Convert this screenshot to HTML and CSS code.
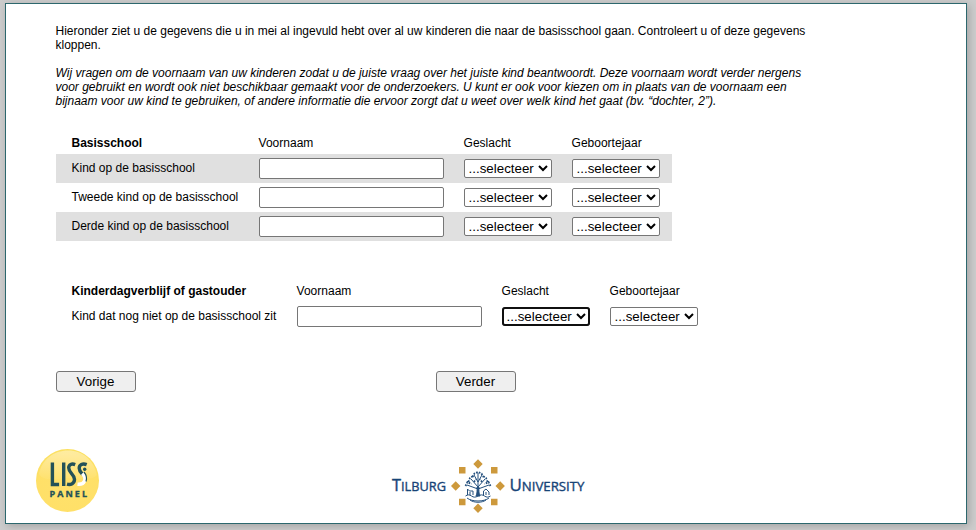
FILE: index.html
```html
<!DOCTYPE html>
<html lang="nl">
<head>
<meta charset="utf-8">
<title>LISS panel</title>
<link rel="stylesheet" href="styles.css">
</head>
<body>
<main class="page">
  <form class="content">
    <p class="intro">Hieronder ziet u de gegevens die u in mei al ingevuld hebt over al uw kinderen die naar de basisschool gaan. Controleert u of deze gegevens<br>kloppen.</p>
    <p class="intro note">Wij vragen om de voornaam van uw kinderen zodat u de juiste vraag over het juiste kind beantwoordt. Deze voornaam wordt verder nergens<br>voor gebruikt en wordt ook niet beschikbaar gemaakt voor de onderzoekers. U kunt er ook voor kiezen om in plaats van de voornaam een<br>bijnaam voor uw kind te gebruiken, of andere informatie die ervoor zorgt dat u weet over welk kind het gaat (bv. “dochter, 2”).</p>

    <section class="children school">
      <div class="row head"><strong>Basisschool</strong><span>Voornaam</span><span>Geslacht</span><span>Geboortejaar</span></div>
      <div class="row shaded"><span>Kind op de basisschool</span><input type="text"><select><option>...selecteer</option></select><select><option>...selecteer</option></select></div>
      <div class="row"><span>Tweede kind op de basisschool</span><input type="text"><select><option>...selecteer</option></select><select><option>...selecteer</option></select></div>
      <div class="row shaded"><span>Derde kind op de basisschool</span><input type="text"><select><option>...selecteer</option></select><select><option>...selecteer</option></select></div>
    </section>

    <section class="children daycare">
      <div class="row head"><strong>Kinderdagverblijf of gastouder</strong><span>Voornaam</span><span>Geslacht</span><span>Geboortejaar</span></div>
      <div class="row"><span>Kind dat nog niet op de basisschool zit</span><input type="text"><select class="active"><option>...selecteer</option></select><select><option>...selecteer</option></select></div>
    </section>

    <div class="buttons"><button type="button">Vorige</button><button type="button">Verder</button></div>
  </form>

  <footer class="logos">
    <svg class="liss" width="64" height="65" viewBox="0 0 64 65">
      <defs>
        <radialGradient id="ball" cx=".5" cy=".55" r=".55"><stop offset="0" stop-color="#ffe16c"/><stop offset=".86" stop-color="#ffe068"/><stop offset="1" stop-color="#fbe05f"/></radialGradient>
        <linearGradient id="shine" x1="0" y1="0" x2="0" y2="1"><stop offset="0" stop-color="#fff" stop-opacity=".4"/><stop offset="1" stop-color="#fff" stop-opacity=".04"/></linearGradient>
      </defs>
      <circle cx="31.500" cy="32.500" r="31.500" fill="url(#ball)"/>
      <path d="M3 26C6 11 18 2.500 32 2.500c15 0 26 10 29 24.500-5 6-14 3-26 3-13 0-26 5-32-4z" fill="url(#shine)"/>
      <g fill="none" stroke="#245158" stroke-width="3.400">
        <path d="M16.400 14.500v22h6.700M27.700 14.500v23.500"/>
        <path d="M39.200 16.600c-3.400-1.300-6.500-.2-6.500 3.200 0 5.200 5.800 6.300 5.800 11.500 0 4.300-3.700 5.900-7.500 4.900"/>
        <path d="M50.700 16.600c-4.200-1.700-7.500.1-7.500 3.600 0 2.700 1.600 4.200 3.400 6.200"/>
        <path d="M46.300 25.500c4.700 4.500 3 11.500-4.800 10.700" stroke="#fff"/>
      </g>
      <circle cx="48.700" cy="21.300" r="1.700" fill="#245158"/>
      <path d="M48 24c2.500 3 3 6.500 2 9.500" fill="none" stroke="#245158" stroke-width="1.200"/>
      <text x="13.500" y="48.700" textLength="37.500" class="liss-name">PANEL</text>
    </svg>

    <svg class="tilburg" width="196" height="56" viewBox="0 0 196 56">
      <g class="uni-name">
        <text x="2" y="33" textLength="54" lengthAdjust="spacingAndGlyphs"><tspan class="cap">T</tspan>ILBURG</text>
        <text x="119.500" y="33" textLength="75" lengthAdjust="spacingAndGlyphs"><tspan class="cap">U</tspan>NIVERSITY</text>
      </g>
      <g fill="#cd993c">
        <path d="M88 1.300l4.700 4.700-4.700 4.700L83.300 6zM88 45.600l4.700 4.700L88 55l-4.700-4.700zM65.700 23.300l4.700 4.700-4.700 4.700L61 28zM110.200 23.300l4.700 4.700-4.700 4.700-4.700-4.700z"/>
        <path d="M69 9h6.500v6.500H69zM101 9h6.500v6.500H101zM69 40.800h6.500v6.500H69zM101 40.800h6.500v6.500H101z"/>
      </g>
      <g fill="none" stroke="#24507e" stroke-width="1">
        <path d="M88 29l-7-8M88 29l7-8M88 31V15M88 24l-4-7M88 24l4-7M88 31l-11-4M88 31l11-4"/>
        <path d="M86 38c1.200-2 1.200-6 1-9h2c-.2 3-.2 7 1 9z" fill="#24507e"/>
        <path stroke-width="1.800" stroke-dasharray="1.700 1.200" d="M82.500 19l2-3.500L88 14l3.500 1.500 2 3.500M78.500 24l1.500-4 3-2M97.500 24L96 20l-3-2M75.500 28l2-4 4 2M100.500 28l-2-4-4 2M84 24l2-3M92 24l-2-3"/>
        <path d="M75.500 38c2-1.500 4-1.500 6 0s4 1.500 6.500 0 4.500-1.500 6.500 0 4 1.500 6 0M77 40c5 4 17 4 22 0M80 42c4 3 12 3 16 0"/>
        <path d="M77.500 37v-6l2 2h3.500v4M80 37v-3M93.500 37v-4l2.500-2 3 3v3M96 37v-3"/>
      </g>
    </svg>
  </footer>
</main>
</body>
</html>
```
FILE: styles.css
```css
* {
  box-sizing: border-box;
}

body {
  margin: 0;
  padding: 3px 9px 6px 5px;
  background: #ccc;
  color: #000;
  font: 12px/14px "Liberation Sans", Arial, sans-serif;
}

.page {
  height: 521px;
  padding: 20px 30px 0;
  border: 1px solid #2c676d;
  background: #fff;
  box-shadow: 2px 2px 8px rgba(0, 0, 0, .2);
}

.content {
  width: 780px;
  height: 424px;
  padding-left: 20px;
}

.intro {
  margin: 0 0 14px -.5px;
  white-space: nowrap;
}

.note {
  margin-bottom: 24px;
  font-style: italic;
}

.children {
  width: max-content;
}

.row {
  display: grid;
  column-gap: 20px;
  align-items: center;
  height: 29px;
  padding: 0 12.400px 0 15.500px;
}

.school .row {
  grid-template-columns: 167.100px 185px 88px 88px;
}

.daycare .row {
  grid-template-columns: 205.100px 185px 88px 88px;
}

.shaded {
  background: #e0e0e0;
}

.children .head {
  height: 22px;
}

.row > span,
.row > strong {
  position: relative;
  top: -.5px;
  white-space: nowrap;
}

.daycare {
  margin-top: 39px;
}

input,
select,
button {
  margin: 0;
  border: 1px solid #767676;
  color: #000;
  font: 13.333px "Liberation Sans", Arial, sans-serif;
}

input {
  width: 185px;
  height: 21px;
  border-radius: 2px;
}

select {
  width: 88px;
  height: 19px;
  border-radius: 2px;
  background-color: #fff;
}

.active {
  border-radius: 3px;
  outline: 2px solid #101010;
  outline-offset: -2px;
}

.buttons {
  display: flex;
  gap: 300px;
  margin-top: 40px;
}

button {
  width: 80px;
  height: 21px;
  padding: 0 1px 1px 0;
  border-radius: 3px;
  background: #efefef;
}

.logos {
  display: flex;
  align-items: flex-start;
}

.tilburg {
  margin: 10px 0 0 289.500px;
}

.liss-name {
  fill: #245158;
  stroke: #245158;
  stroke-width: .3px;
  font: bold 9px "Open Sans", sans-serif;
}

.uni-name {
  fill: #174477;
  stroke: #174477;
  stroke-width: .35px;
  font: 12.500px "Open Sans", sans-serif;
}

.cap {
  font-size: 16px;
}
```
